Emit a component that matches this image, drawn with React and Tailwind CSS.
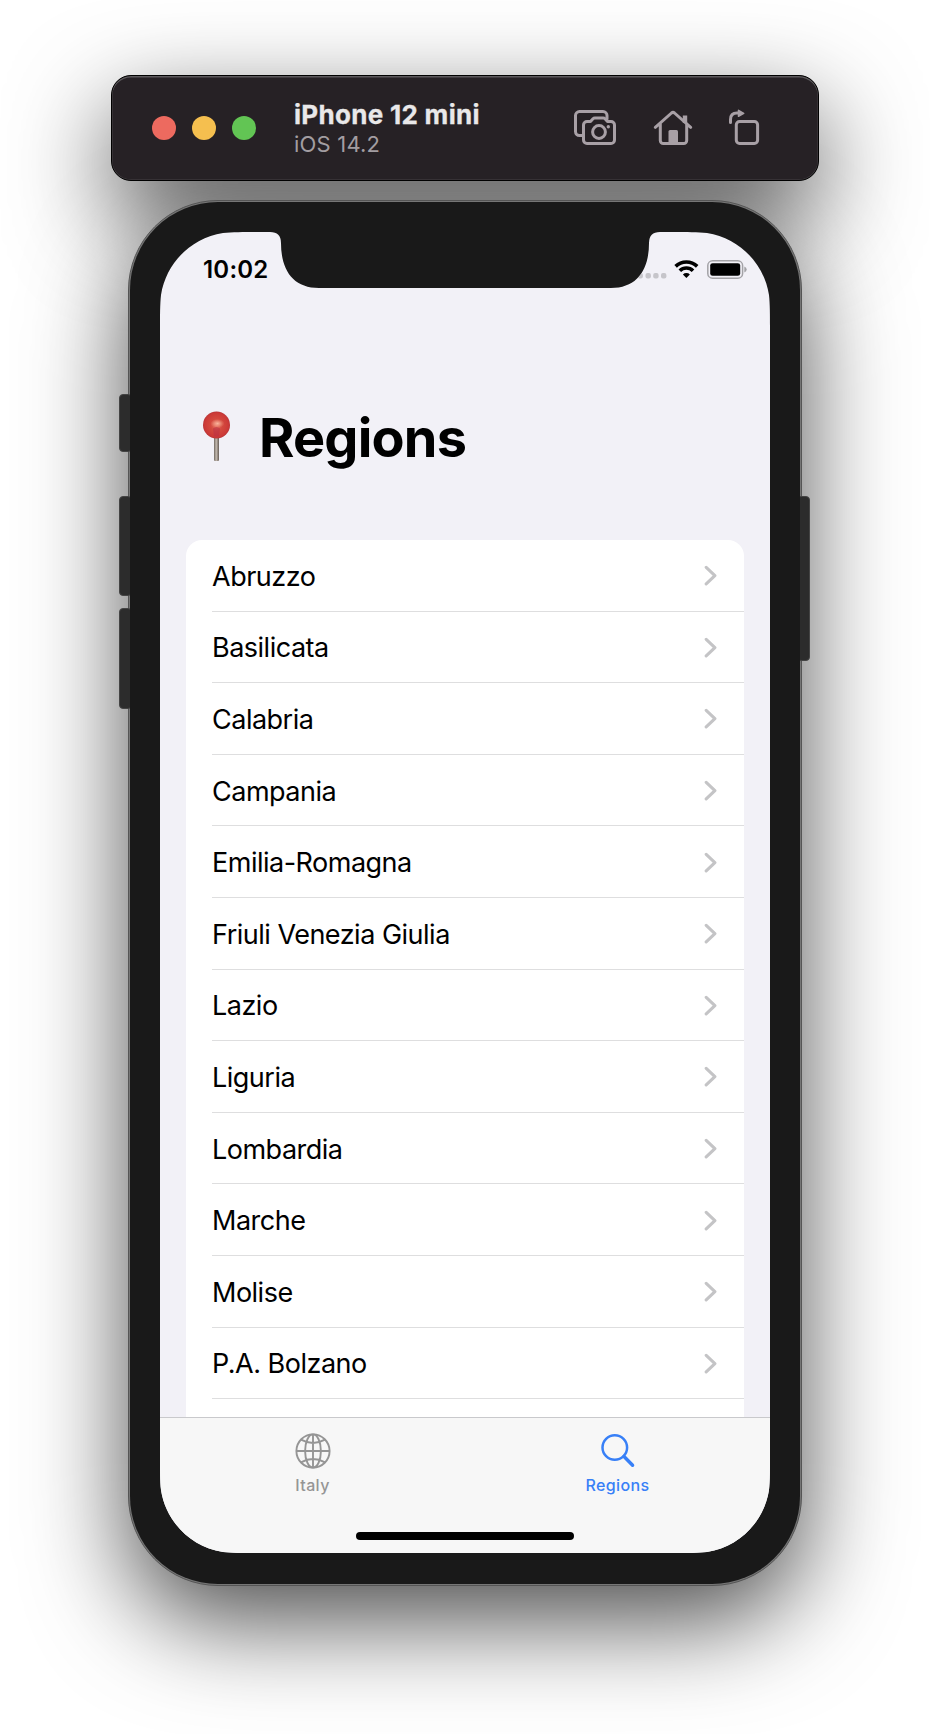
const regions = [
  "Abruzzo", "Basilicata", "Calabria", "Campania", "Emilia-Romagna", "Friuli Venezia Giulia",
  "Lazio", "Liguria", "Lombardia", "Marche", "Molise", "P.A. Bolzano",
];

function ToolbarIcons() {
  return (
    <svg className="mt-[-5px] mr-[58px] ml-auto h-[40px] w-[190px] shrink-0" viewBox="570 106 190 40" fill="none" stroke="#a8a0a6" strokeWidth="3" strokeLinecap="round" strokeLinejoin="round">
      <path d="M582 135.600h-2.500a4 4 0 0 1-4-4v-16a4 4 0 0 1 4-4h23.500a4 4 0 0 1 4 4v3.500" />
      <path d="M587 121.500h3.500l2.500-2.700q.8-.8 1.800-.8h8.400q1 0 1.800.8l2.500 2.700h3.500a3.500 3.500 0 0 1 3.500 3.500v15a3.500 3.500 0 0 1-3.500 3.500h-24a3.500 3.500 0 0 1-3.500-3.500v-15a3.500 3.500 0 0 1 3.500-3.500z" />
      <circle cx="599" cy="132" r="6.400" />
      <circle cx="608.300" cy="126.700" r="1.700" fill="#a8a0a6" stroke="none" />
      <path d="M655.300 127.300l16.200-14.300q1.500-1.200 3 0l16.200 14.300M660.300 124v16.500a3 3 0 0 0 3 3h20.400a3 3 0 0 0 3-3V124" />
      <path d="M685 123v-7.500" strokeWidth="4.400" strokeLinecap="butt" />
      <path d="M668.500 143v-11.500q0-1.500 1.500-1.500h6.500q1.500 0 1.500 1.500V143z" fill="#a8a0a6" stroke="none" />
      <rect x="736.300" y="121.500" width="21.300" height="22" rx="3.200" />
      <path d="M730.500 122.500v-3q0-6.500 6.500-6.500h2" />
      <path d="M738.500 110.300l5.200 3-5.200 3z" fill="#a8a0a6" strokeWidth="1.500" />
    </svg>
  );
}

function StatusIcons() {
  return (
    <svg className="h-[24px] w-[112px]" viewBox="636 258 112 24" fill="none">
      <g fill="#c6c5ca">
        <rect x="637.500" y="273" width="5.400" height="5.400" rx="2" />
        <rect x="645.500" y="273" width="5.400" height="5.400" rx="2" />
        <rect x="653.200" y="273" width="5.400" height="5.400" rx="2" />
        <rect x="661" y="273" width="5.400" height="5.400" rx="2" />
      </g>
      <g stroke="#000" strokeWidth="3.600">
        <path d="M675.600 266.400a15.400 15.400 0 0 1 21.600 0" />
        <path d="M679.800 270.800a9.300 9.300 0 0 1 13.200 0" />
      </g>
      <path d="M682.900 274.400a5 5 0 0 1 7 0l-3.500 3.700z" fill="#000" />
      <rect x="707.800" y="260.800" width="34.800" height="17.400" rx="4.800" stroke="#a3a2a6" strokeWidth="1.500" />
      <rect x="710.200" y="263.200" width="30" height="12.600" rx="2.400" fill="#000" />
      <path d="M744.300 266.600q2.400 1 2.400 3t-2.400 3z" fill="#a3a2a6" />
    </svg>
  );
}

function Pin() {
  return (
    <svg className="mt-[11px] h-[52px] w-[28px] shrink-0" viewBox="0 0 28 52">
      <defs>
        <radialGradient id="ball" cx=".5" cy=".5" r=".55">
          <stop offset="0" stopColor="#e87765" />
          <stop offset=".4" stopColor="#d4493e" />
          <stop offset=".8" stopColor="#cc3a37" />
          <stop offset="1" stopColor="#a93038" />
        </radialGradient>
        <radialGradient id="glow">
          <stop offset="0" stopColor="#f9b49c" />
          <stop offset="1" stopColor="#f09a80" stopOpacity="0" />
        </radialGradient>
        <linearGradient id="needle">
          <stop offset="0" stopColor="#6f665f" />
          <stop offset=".45" stopColor="#c5bbb0" />
          <stop offset="1" stopColor="#655b55" />
        </linearGradient>
      </defs>
      <path d="M12 24h5v25.500q-2.500 1.200-5 0z" fill="url(#needle)" />
      <circle cx="14.500" cy="14" r="13.500" fill="url(#ball)" />
      <ellipse cx="15.500" cy="12.500" rx="7" ry="4.500" fill="url(#glow)" />
      <path d="M11 17.500q3.500-3 7 0l-1 8h-5z" fill="#b52d45" opacity=".5" />
    </svg>
  );
}

function Globe() {
  return (
    <svg className="h-[36px] w-[36px]" viewBox="0 0 36 36" fill="none" stroke="#959595" strokeWidth="1.900">
      <circle cx="18" cy="18" r="16.600" />
      <ellipse cx="18" cy="18" rx="7.900" ry="16.600" />
      <path d="M18 1v34M1 18h34M6 6.700q12 6.600 24 0M6 29.300q12-6.600 24 0" />
    </svg>
  );
}

function Search() {
  return (
    <svg className="h-[36px] w-[36px]" viewBox="0 0 36 36" fill="none" stroke="#3880f7" strokeLinecap="round">
      <circle cx="14.800" cy="14.500" r="12.300" strokeWidth="2.500" />
      <path d="M24 23.500l8.600 8.800" strokeWidth="3.400" />
    </svg>
  );
}

function Chevron() {
  return (
    <svg className="mr-[27px] h-[22px] w-[13px]" viewBox="0 0 13 22" fill="none" stroke="#c4c4c6" strokeWidth="3.100" strokeLinecap="round" strokeLinejoin="round">
      <path d="M2.200 3.300l8.700 8.300-8.700 8.300" />
    </svg>
  );
}

export default function App() {
  return (
    <div className="isolate flex h-[1734px] w-[930px] flex-col items-center overflow-hidden bg-white pt-[75px] font-[Inter,sans-serif] text-black">
      <header className="relative flex h-[106px] w-[708px] shrink-0 items-center rounded-[20px] border border-black bg-[#262125] pl-[40px] shadow-[inset_0_1.5px_0_#5c595c,inset_0_0_0_0.5px_#464346]">
        <span className="absolute inset-0 -z-10 rounded-[20px] shadow-[0_36px_100px_rgba(0,0,0,0.7)]" />
        <div className="flex gap-[16px]">
          <span className="size-[24px] rounded-full bg-[#ed6a5f]" />
          <span className="size-[24px] rounded-full bg-[#f5bf4f]" />
          <span className="size-[24px] rounded-full bg-[#62c554]" />
        </div>
        <div className="ml-[38px] whitespace-nowrap">
          <div className="text-[26px] leading-[32px] font-bold tracking-[0.3px] text-[#e9e8e9] [-webkit-text-stroke:0.3px_#e9e8e9]">iPhone 12 mini</div>
          <div className="text-[22px] leading-[27px] tracking-[0.2px] text-[#a29da1]">iOS 14.2</div>
        </div>
        <ToolbarIcons />
      </header>

      <main className="relative mt-[19px] h-[1386px] w-[674px] shrink-0 rounded-[90px] border border-[#555] bg-[#767676] p-px">
        <span className="absolute inset-0 -z-10 rounded-[90px] shadow-[0_36px_100px_rgba(0,0,0,0.7)]" />
        <span className="absolute top-[193px] left-[-10px] h-[58px] w-[13px] rounded-[4px] border border-[#444] bg-[#2c2c2c]" />
        <span className="absolute top-[295px] left-[-10px] h-[100px] w-[13px] rounded-[4px] border border-[#444] bg-[#2c2c2c]" />
        <span className="absolute top-[407px] left-[-10px] h-[101px] w-[13px] rounded-[4px] border border-[#444] bg-[#2c2c2c]" />
        <span className="absolute top-[295px] right-[-9px] h-[165px] w-[13px] rounded-[4px] border border-[#444] bg-[#2c2c2c]" />
        <div className="relative h-full w-full rounded-[88px] bg-[#191919] p-[30px]">
          <div className="flex h-[1321px] w-[610px] flex-col bg-[#f2f1f7] [clip-path:path('M0_95C0_84_0_72_1_63C6_31_31_6_63_1C72_0_84_0_95_0H110Q121_0_121_11C121_38_133_56_159_56H451C477_56_489_38_489_11Q489_0_500_0H515C526_0_538_0_547_1C579_6_604_31_609_63C610_72_610_84_610_95V1226C610_1237_610_1249_609_1258C604_1290_579_1315_547_1320C538_1321_526_1321_515_1321H95C84_1321_72_1321_63_1320C31_1315_6_1290_1_1258C0_1249_0_1237_0_1226Z')]">
            <div className="flex h-[76px] shrink-0 items-center justify-between pr-[22px] pl-[43px]">
              <span className="text-[24px] font-semibold tracking-[0.2px]">10:02</span>
              <StatusIcons />
            </div>
            <div className="mt-[92px] flex h-[76px] shrink-0 pl-[42px]">
              <Pin />
              <h1 className="ml-[29px] text-[54px] leading-[76px] font-bold tracking-[-0.8px]">Regions</h1>
            </div>
            <ul className="mx-[26px] mt-[64px] flex-1 overflow-hidden rounded-t-[16px] bg-white">
              {regions.map((r) => (
                <li key={r} className="ml-[26px] flex h-[71.6px] items-center justify-between border-b border-[#dededf] text-[27px] tracking-[-0.5px]">
                  <span className="pt-[3.5px]">{r}</span>
                  <Chevron />
                </li>
              ))}
            </ul>
            <nav className="flex h-[136px] shrink-0 flex-col border-t border-[#c9c9cc] bg-[#f7f7f7]">
              <div className="grid grid-cols-2 pt-[15px] text-[16px] leading-[20px] font-medium tracking-[0.4px]">
                <div className="flex flex-col items-center gap-[6px] text-[#959595]"><Globe />Italy</div>
                <div className="flex flex-col items-center gap-[6px] text-[#3880f7]"><Search />Regions</div>
              </div>
              <div className="mx-auto mt-[37px] h-[8px] w-[218px] rounded-full bg-black" />
            </nav>
          </div>
        </div>
      </main>
    </div>
  );
}
